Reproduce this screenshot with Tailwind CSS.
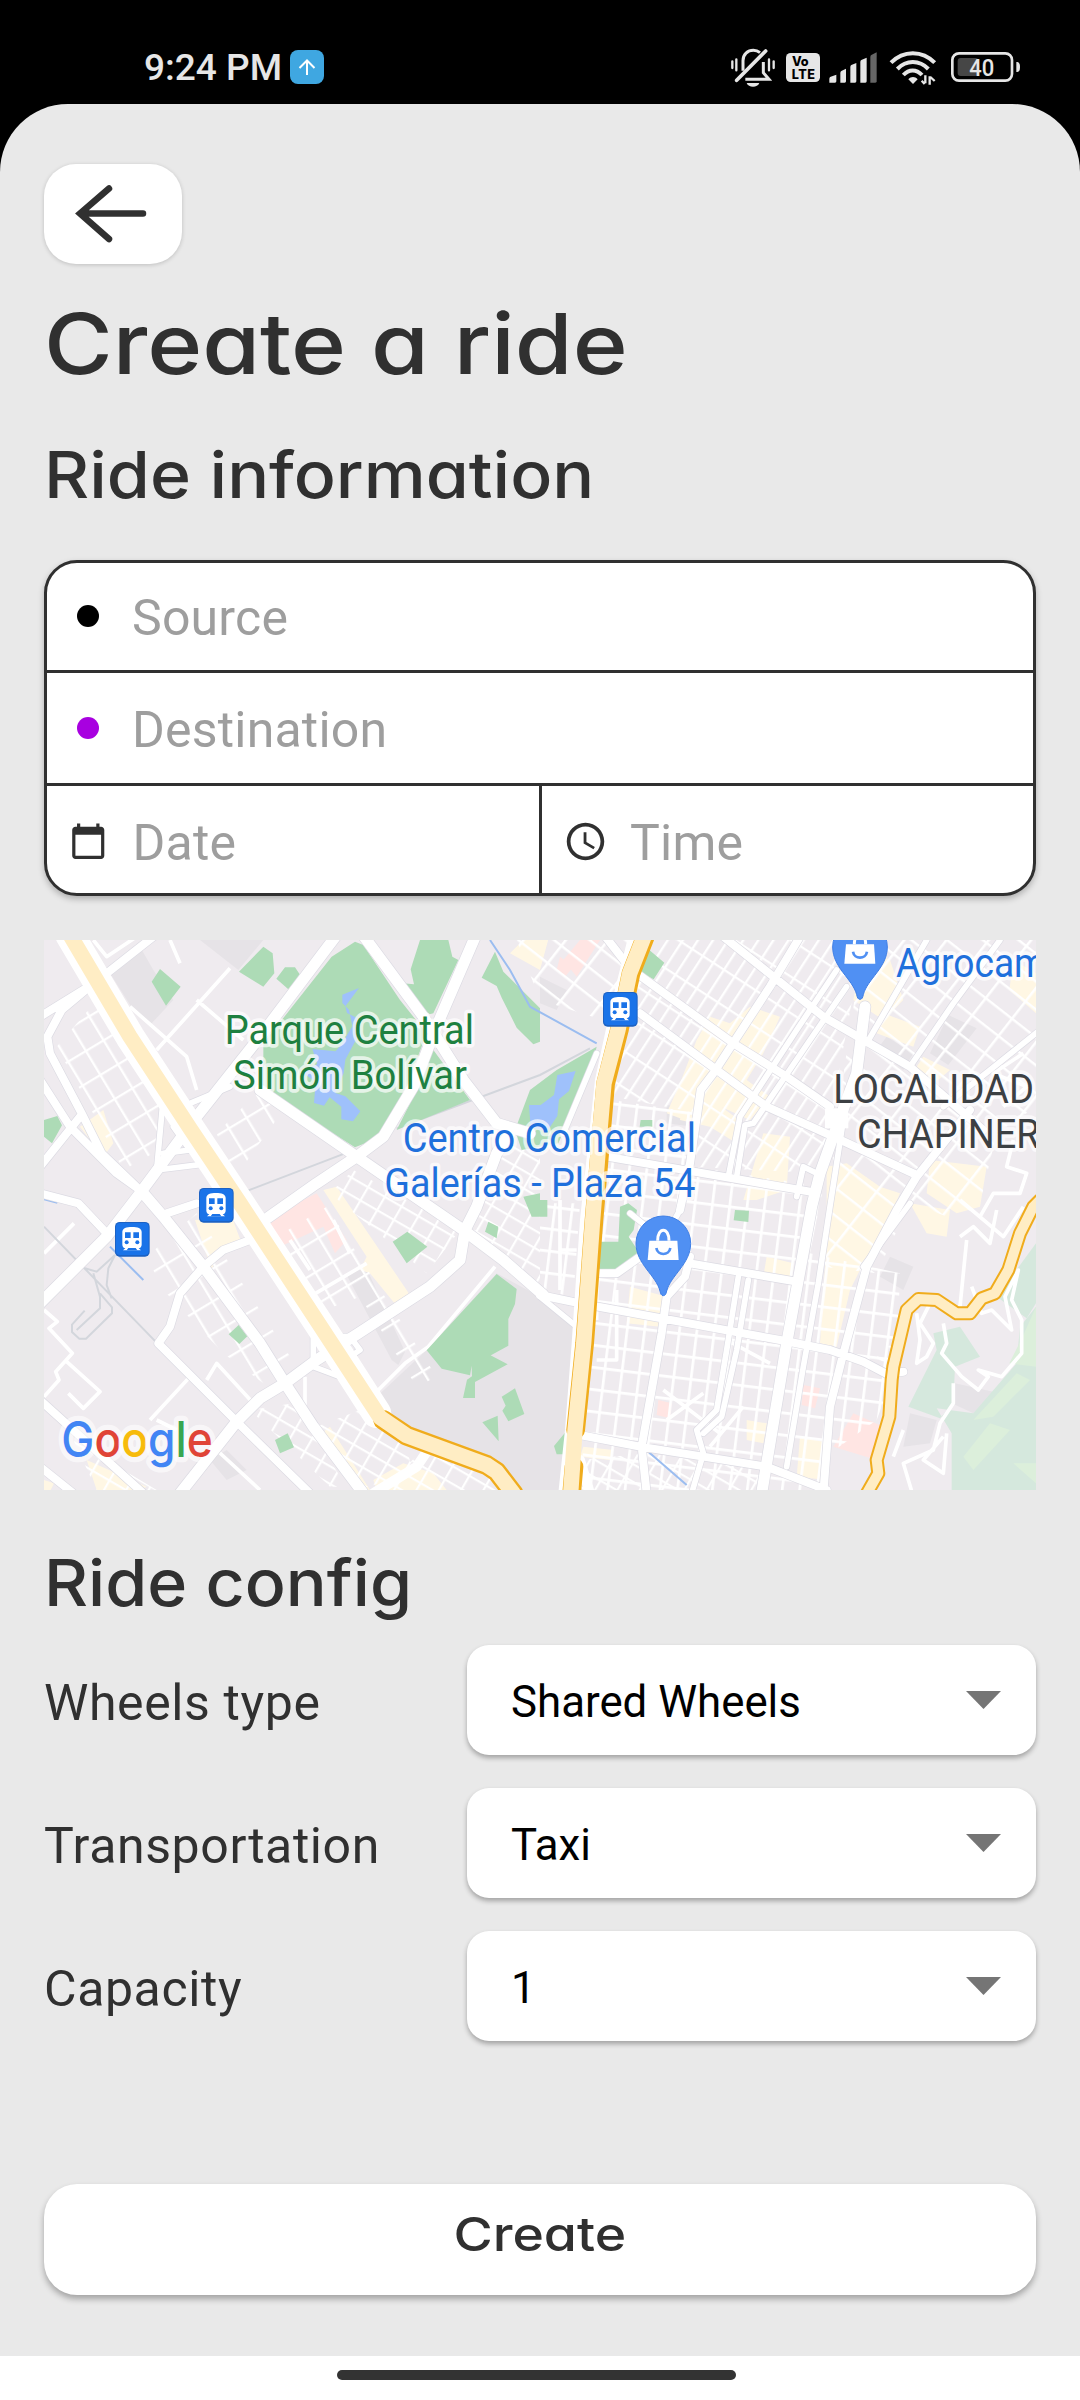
<!DOCTYPE html>
<html lang="en">
<head>
<meta charset="utf-8">
<title>Create a ride</title>
<script src="https://cdn.jsdelivr.net/npm/@tailwindcss/browser@4"></script>
</head>
<body class="bg-black">
<div class="w-[1080px] h-[2400px] overflow-hidden flex flex-col font-['Roboto',sans-serif] text-[#303030]">
  <header class="h-[104px] shrink-0 flex items-start justify-between pl-[144px] pr-[57px]">
    <div class="flex items-start gap-[8px] pt-[47px]">
      <span class="text-[37px] leading-[42px] font-medium text-[#e6e6e6]">9:24 PM</span>
      <svg class="w-[34px] h-[34px] mt-[3px]" viewBox="0 0 34 34"><rect width="34" height="34" rx="8" fill="#3fa7e1"/><path d="M17 25V11M9.500 18l7.500-7.500L24.500 18" fill="none" stroke="#fff" stroke-width="2"/></svg>
    </div>
    <svg class="w-[293px] h-[43px] mt-[47px]" viewBox="90 51 879 129" fill="#e6e6e6">
      <g fill="none" stroke="#e6e6e6">
        <path d="M129 122V92C129 73 143 61 160 61c8 0 15 3 20 7M190 96v32l17 20H136" stroke-width="9"/>
        <path d="M197 63L110 151" stroke-width="11" stroke-linecap="round"/>
        <path d="M97 94v20M109 88v33M207 88v33M221 94v20" stroke-width="7" stroke-linecap="round"/>
      </g>
      <path d="M140 159h38c-5 15-33 15-38 0z"/>
      <rect x="258" y="69" width="102" height="87" rx="14"/>
      <g fill="#000" font-family="Inter, sans-serif" font-weight="800" font-size="38"><text x="276" y="109" textLength="50">Vo</text><text x="275" y="146" textLength="70">LTE</text></g>
      <path d="M388 158v-12q0-4 4-6l17-6v20q0 4-4 4zM421 158v-29q0-4 3-6l14-7v38q0 4-4 4zM451 158v-47q0-4 3-6l15-6v55q0 4-4 4zM481 158V96q0-4 3-6l16-7v71q0 4-4 4z"/>
      <path fill="#666" d="M511 158V81q0-4 3-6l16-8v87q0 4-4 4z"/>
      <g fill="none" stroke="#e6e6e6" stroke-width="12"><path d="M573 98c37-38 94-38 131 0M592 117c27-28 66-28 93 0M610 135c17-18 39-18 56 0"/></g>
      <path d="M639 162l-14-14c8-9 20-9 28 0z"/>
      <path d="M676 136v24M689 164v-25M665 152l9 10M691 141l13 12" stroke="#e6e6e6" stroke-width="7"/>
      <rect x="757" y="70" width="179" height="82" rx="20" fill="none" stroke="#e6e6e6" stroke-width="8"/>
      <rect x="773" y="84" width="62" height="54" rx="9" fill="#464646"/>
      <path d="M949 96c9 0 11 6 11 15s-2 15-11 15z"/>
      <text x="808" y="137" font-size="69" font-weight="500" font-family="Roboto, sans-serif" textLength="75" lengthAdjust="spacingAndGlyphs">40</text>
    </svg>
  </header>

  <main class="h-[2252px] shrink-0 bg-[#e9e9e9] rounded-t-[68px] px-[44px] pt-[60px] flex flex-col">
    <button class="w-[138px] h-[100px] shrink-0 rounded-[32px] bg-white shadow-[0_1px_4px_rgba(0,0,0,0.18)] flex items-center justify-center">
      <svg class="w-[78px] h-[66px]" viewBox="0 0 78 66" fill="none" stroke="#303030" stroke-width="6.500" stroke-linecap="round"><path d="M35 7.500L6 32.500l29 25.500M7 32.500h62"/></svg>
    </button>
    <h1 class="mt-[30px] text-[84px] leading-[100px] font-medium font-['Inter',sans-serif] [font-feature-settings:'cv11'] origin-left scale-x-[1.115] whitespace-nowrap">Create a ride</h1>
    <h2 class="mt-[41px] text-[64.5px] leading-[80px] font-medium font-['Inter',sans-serif] [font-feature-settings:'cv11'] origin-left scale-x-[1.082] whitespace-nowrap">Ride information</h2>

    <section class="mt-[45px] w-[992px] h-[336px] shrink-0 rounded-[33px] border-[3px] border-[#303030] bg-white shadow-[0_3px_6px_rgba(0,0,0,0.25)] flex flex-col text-[50px] leading-[60px] text-[#9e9e9e] tracking-[0.2px]">
      <div class="h-[110px] border-b-[3px] border-[#303030] flex items-center pl-[30px] gap-[33px]">
        <span class="size-[22px] rounded-full bg-black -mt-[2px]"></span><span class="pt-[2px]">Source</span>
      </div>
      <div class="h-[113px] border-b-[3px] border-[#303030] flex items-center pl-[30px] gap-[33px]">
        <span class="size-[22px] rounded-full bg-[#a800e0]"></span><span class="pt-[4px]">Destination</span>
      </div>
      <div class="h-[107px] flex">
        <div class="w-[495px] border-r-[3px] border-[#303030] flex items-center pl-[22px] gap-[25px]">
          <svg class="size-[38.5px] mt-[3px]" viewBox="0 0 24 24" fill="#303030"><path d="M20 3h-1V1h-2v2H7V1H5v2H4c-1.100 0-2 .9-2 2v16c0 1.100.9 2 2 2h16c1.100 0 2-.9 2-2V5c0-1.100-.9-2-2-2zm0 18H4V8h16z"/></svg>
          <span class="pt-[6px]">Date</span>
        </div>
        <div class="flex items-center pl-[21px] gap-[22px]">
          <svg class="size-[45px] mt-[3px]" viewBox="0 0 24 24" fill="#303030"><path d="M11.990 2C6.470 2 2 6.480 2 12s4.470 10 9.990 10C17.520 22 22 17.520 22 12S17.520 2 11.990 2zM12 20c-4.420 0-8-3.580-8-8s3.580-8 8-8 8 3.580 8 8-3.580 8-8 8zm.5-13H11v6l5.250 3.150.75-1.230-4.500-2.670z"/></svg>
          <span class="pt-[6px]">Time</span>
        </div>
      </div>
    </section>

    <svg class="mt-[44px] w-[992px] h-[550px] shrink-0 block" viewBox="42 60 2976 1650">
      <defs>
        <pattern id="g1" width="52" height="66" patternUnits="userSpaceOnUse" patternTransform="rotate(7)"><path d="M0 0H52M0 0V66" stroke="#fff" stroke-width="16" fill="none"/></pattern>
        <pattern id="g2" width="38" height="92" patternUnits="userSpaceOnUse" patternTransform="rotate(33)"><path d="M0 0H38M0 0V92" stroke="#fff" stroke-width="14" fill="none"/></pattern>
        <pattern id="g3" width="100" height="66" patternUnits="userSpaceOnUse" patternTransform="rotate(38)"><path d="M0 0H100M0 0V66" stroke="#fff" stroke-width="15" fill="none"/></pattern>
        <pattern id="g4" width="62" height="84" patternUnits="userSpaceOnUse" patternTransform="rotate(-31)"><path d="M0 0H62M0 0V84" stroke="#fff" stroke-width="14" fill="none"/></pattern>
        <pattern id="g5" width="58" height="46" patternUnits="userSpaceOnUse" patternTransform="rotate(30)"><path d="M0 0H58M0 0V46" stroke="#fff" stroke-width="13" fill="none"/></pattern>
        <g id="train"><rect width="104" height="104" rx="14" fill="#1c62c4"/><rect x="3" y="3" width="98" height="96" rx="12" fill="#1a73e8"/><path fill="#fff" d="M22 30c0-11 12-15 29-15s29 4 29 15v38c0 6-4 10-9 11l7 6H24l7-6c-5-1-9-5-9-11z"/><path fill="#1a73e8" d="M30 31h17v17H30zM55 31h17v17H55zM40 78h22l5 7H35z"/><circle cx="35" cy="61" r="6" fill="#1a73e8"/><circle cx="67" cy="61" r="6" fill="#1a73e8"/></g>
        <g id="pin"><path d="M0 157c-6 0-8-5-10-14C-22 96-82 62-82 0a82 82 0 0 1 164 0C82 62 22 96 10 143c-2 9-4 14-10 14z" fill="#5090f3" stroke="#3f7fe6" stroke-width="3"/><path d="M-42-8h84l4 58h-93z" fill="#fff"/><path d="M-17-8c0-42 34-42 34 0" fill="none" stroke="#fff" stroke-width="9"/><path d="M-21 14c4 24 38 24 42 0" fill="none" stroke="#5090f3" stroke-width="8"/></g>
        <path id="avenues" d="M920 45L690 350 500 590 330 820 230 950 30 1150M995 40L1180 290 1300 480 1400 610 1500 640M1340 40L1215 330 1150 500 1060 650 980 710 860 790 690 910M690 510L980 710 1300 930 1420 1020 1540 1125M1440 640L1400 700 1340 860 1305 930 1290 1020 1200 1100 985 1240 860 1320 765 1390 690 1435 620 1505 450 1720M340 820L400 890 520 1040 690 1270 765 1390 850 1520 1000 1720M2505 260L2480 460 2420 620 2370 760 2345 860 2270 1270 2195 1720"/>
        <path id="roads" d="M370 50L230 160 160 210 30 290M190 190L95 270 52 350 60 400 155 580 215 700 340 820M30 480L120 620 260 760 330 810M30 740L150 590M30 820L145 850 230 940M660 960L580 990 520 1040 450 1120 420 1220 385 1270 620 1505 840 1720M30 1440L340 1720M30 1640L130 1720M410 880L500 850M1530 1125L1650 1150 2250 1260 2400 1290 2500 1325 2570 1362 2620 1355M1730 710L2340 815M1690 1060L1760 1060 1830 1010M1980 1030L2300 1085M1650 1545L1830 1580 2210 1640 2390 1710M2820 570L2660 770 2600 870 2510 1040 2435 1320 2400 1460 2380 1720M2310 50L2220 200 2050 460 2012 510 1980 730 1950 870M1980 1010L1965 1070 1910 1130 1895 1240 1835 1580 1850 1720M1820 160L2110 370 2270 470 2400 560M1830 280L2060 450 2210 560 2410 650 2660 765M2080 50L2230 170 2380 290 2640 440 2860 630M1730 55L1820 170"/>
        <path id="streets" d="M2420 150L2300 330 2130 590 2095 770M2450 200L2340 360 2170 610 2145 615 2120 770M2125 1070L2090 1290 2060 1470 2000 1530 2020 1600 1985 1720M2155 1080L2120 1290 2075 1490 2020 1540M2440 600L2400 860 2365 1090 2320 1340 2270 1640M2910 60L2770 250 2640 440M2690 60L2510 370M3030 330L2880 450 2740 560M1700 400L1600 640M2300 830L2320 740 2360 760M430 620L480 690 400 700M400 530L380 750 540 730M480 550L600 500M850 1250L850 1340 930 1370M900 1250l60 0 30 40-60 40M1800 880L1900 960 1950 870M1530 1130L1640 1220M2500 1040L2640 850"/>
        <path id="highway" d="M3030 840L3010 860 2970 940 2935 1050 2895 1120 2855 1135 2820 1180 2780 1180 2720 1140 2665 1137 2630 1170 2590 1340 2585 1380 2578 1490 2540 1620 2545 1660 2505 1730"/>
      </defs>
      <rect x="42" y="60" width="2976" height="1650" fill="#efebef"/>
      <!-- darker blocks -->
      <g fill="#e6e3e7">
        <path d="M330 80L240 160 310 270 365 310 430 240 370 150zM510 60H700L625 150z"/>
        <path d="M1190 1290L1400 1060 1530 1130 1640 1210 1620 1500 1600 1710H1450L1380 1630 1130 1530 1040 1430zM950 1065l55-30 120 260-20 40-20-15z"/>
        <path d="M1910 555l85 10-5 55-80-10zM2755 285l85 40-85 110-55-35zM2570 350l80 50-30 50-80-60zM2580 1010l70 30-30 70-70-40zM2640 1480l80 20-20 70-80 10zM2775 1390l135 30-80 60-65-30zM1530 170l80 40-30 60-50-20zM540 1620l50-30 60 60-60 30z"/>
      </g>
      <!-- commercial blocks -->
      <g fill="#fff7e4">
        <path d="M2000 360l40-70 60 20 60-50 90 30-50 110-50 80 70 50-60 70-110-50-60 60-80-30 40-90zM1960 520l100 30 80 60-20 60-80-50-90-20zM2560 280l110 40-20 60-110-40zM2680 410l80 40-60 50-60-30zM2950 120l68 40v120l-80-70zM2500 80l80 40 40 120-60 60-90-60z"/>
        <path d="M2200 640l80 10-10 160-90 30-40 0zM2390 740l60-10 100 70 60 20-40 90-60 100-50 100-40 170-50-10 20-300zM2700 720l170 20-20 120-70 20-90-60zM1800 1100l110 30-20 90-100-10zM2210 1010l80 20-10 60-80-20zM2640 850l120 20-10 80-60-10z"/>
        <path d="M150 620l70-50 30 100-30 40zM495 900l110-10 30 80-70 20-20 60zM880 810l40-10 230 340-40 30-90-110-30-10 20-40zM860 1550l40-30 120 190h-50zM1030 1680l90-50 90 30 40 50H1040zM170 1620l180 80-20 10H200zM42 1680l30 10-10 20H42zM2150 1500l60 10-10 60-50-10zM2310 1550l90 20-10 110-90-10zM1660 1580l90 10-10 30-90-10zM1440 100l60-60h60l-30 110z"/>
      </g>
      <g fill="#ffe5e3"><path d="M700 900L860 820 950 960 915 1000 880 920 750 980zM1600 120l50-60h60l-70 110zM1885 1440l40 10-5 45-40-10zM2320 1395l50 10-15 60-40-10zM2410 1580l60-100 90 40-20 100zM1590 110l40 30-25 30-25-20z"/></g>
      <!-- eastern hills -->
      <path fill="#d5e8dd" d="M3018 970L2900 1130 2990 1195 3018 1150zM3018 1160L2970 1220 2960 1330 2830 1480 2720 1465 2765 1540V1710H3018zM2710 1240L2790 1220 2850 1310 2775 1340 2770 1450 2730 1495 2635 1460 2720 1290z"/>
      <path fill="#dcefdb" d="M3018 1160l-40 90-40 80 80 10zM2830 1500l130-140 40 20-110 110zM2800 1610l80-100 60 20-110 120zM2950 1630l68 0v60z"/>

      <!-- street grids -->
      <path fill="url(#g1)" d="M1745 540L2010 580 1990 740 2380 800 2340 1000 2610 1060 2600 1340 2540 1500 2400 1600 2390 1710H1650L1690 1180zM1530 850h120l-20 280-100-20z"/>
      <path fill="url(#g2)" d="M1850 60H2500L2370 760 1990 740 2010 580 1750 530 1790 250z"/>
      <path fill="url(#g3)" d="M2500 60H3018V560L2900 640 2850 850 2780 900 2640 850 2540 1060 2380 1040 2420 600zM1460 60h350l-60 250-220-70z"/>
      <path fill="url(#g4)" d="M80 380L210 230 400 530 370 700 280 750 200 600zM560 640L690 510 760 570 610 780zM740 950l150-90 330 510-60 30L990 1130 830 1190z"/>
      <path fill="url(#g4)" d="M350 1010l150-130 300 460-100 50-120-90-180-190z"/>
      <path fill="url(#g5)" d="M900 820l70-70 320 180-100 130zM1420 680l110-40v480l-200-180zM860 1520l130-50 130 80 30 110-170 50zM1180 1590l210 50 60 70H1050zM660 1470l130-20 160 250H900zM130 1560l250 150H200zM2530 1320l100-90-30 100zM1650 1620l200-20 350 50v60H1650z"/>
      <g fill="none" stroke="#fff" stroke-width="11" stroke-linejoin="round">
        <path d="M380 390L600 145M300 260l170 150 30 100M500 240l140 120M190 60l40 50 90-60M42 1170l40 35-25 20 70 75-50 55 10 25-45 50M110 1325l100 90-50 50-45-45M42 1000l90-90M360 1500l120-130M380 1500l60 30M530 1380l30-50 110 120M780 960l60 90M910 900l50 100M840 1130l170-100M720 920l30 50M1030 1425l95-95 70-50 200-240M825 1370v90M560 1590l130 120M420 60l30 70"/>
        <path d="M2790 840l130 110 60-90M2790 950l40-30 50 50 20-100M2810 960l-20 200M2660 1180l10 80-10 70 30-20 20-40-40-60 30-60M2740 1210l10 60-15 30 60 70 50 40 30-40-30-20 70 20 60-70 0-100-30-60 20-90-40 80 20 100-60-60-30 10-30-80M2770 1390l0 60-40 60-20 80-90 40 30 100M2590 1610l30-80M2750 1540l-10 120-60-40 60-70M2950 660l-20 80 60 20-20 60-80 0-40 70M2980 400l-90 60 100 40-70 60"/>
        <path d="M1700 1040v160M1760 1110v210h-60M1590 840v270M1640 990h-50M2090 1260l130 70M1900 1410l170 130M1910 1500l110-80M2040 1580l100-120"/>
      </g>
      <path fill="none" stroke="#d3d6dc" stroke-width="6" d="M42 920l340 350M165 1045l35 10 55-50-20 40-5 50 15 40M190 1060l20 70v35l-70 65M210 1120l36 42v18l-78 76h-20l-22-20v-22l38-42M645 815l300-115M1100 625l430-160 150-80"/>

      <!-- parks and water -->
      <g fill="#addbb6">
        <path d="M975 65L1000 75 1060 165 1110 240 1190 340 1130 500 1060 630 1030 660 975 682 700 510 700 370 905 110zM1170 60h85l12 50 18 10-75 160-20 5-72-95 34 3-10-45zM1395 95l25 60 110 110v100l-20 8-50-50-45-90-15-35-45-25zM700 80l28 20 5 60-33 40-73-45zM765 142h30l16 24-36 42-36-32zM390 147l62 53-44 57-43-72zM42 600l40-12 14 28-30 54-24-20zM1210 390l110 150-220 90 50-100zM1500 510l80-60 120-70-15 60-100 230-110 20-20-60z"/>
        <path d="M1400 1062l60 45-5 45-20 45v80l-110 60-5 29-85-20-45-55zM1325 1337l55-32 53 28-98 53v48h-36l12-55 15-10zM1415 1430l40-25 28 77-48 22-18-32 10-15zM1357 1507l46-20 3 77zM1132 935l60 45-62 50-42-65zM596 1243l30-28 26 34-24 23zM735 1560l38-20 19 42-42 18zM1375 905l30 15-5 35-35-20zM1830 100l28-10 45 38-32 50-50-25zM1832 600h35v20h-38zM1770 860l25-10 26 20-10 60-15 20 30 45-20 30-35 35h-66l5-95h55zM2115 870l42 2-2 34-44-5zM1605 1538v65h-25l-8-25zM1480 830l50-10v70h-25zM1530 840h22v50h-22z"/>
      </g>
      <g fill="#9fc1fb"><path d="M987 204l-50 20v25l20 20 10 50-30 50-20 25-70-7 15 45-45 25 40 30-5 62 30 8 17-25 35 28v38l35 6 22-30-45-45-30-10 25-60 5-40 40-75-5-50-30-15-5-20z"/><path d="M1497 555h35l40-30 10-60 55-12-20 60-30 25-5 50-30 45-50-10z"/></g>
      <path fill="none" stroke="#9bbdf0" stroke-width="6" d="M1380 60l60 90 60 110 200 110M240 980l100 100M42 838l40 10M1855 1595l115 100"/>

      <!-- avenues: grey casing under white -->
      <g fill="none" stroke-linejoin="round" stroke-linecap="round">
        <g stroke="#dcdbe3"><use href="#avenues" stroke-width="37"/><use href="#roads" stroke-width="28"/><use href="#streets" stroke-width="21"/></g>
        <g stroke="#fff">
          <use href="#avenues" stroke-width="33"/><use href="#roads" stroke-width="24"/><use href="#streets" stroke-width="17"/>
          <path stroke-width="30" d="M1810 50L1760 250 1710 480 1665 900 1640 1270 1620 1530 1600 1720M1200 1580L1160 1640 1030 1720M1650 1620l30 100"/>
          <path stroke-width="70" stroke-linecap="butt" d="M2420 565v60"/>
        </g>
        <!-- highways -->
        <path stroke="#fff" stroke-width="88" d="M120 45L300 350 480 625 630 850 905 1270 1040 1480"/>
        <path stroke="#f0ac1c" stroke-width="56" d="M1850 40L1803 160 1768 330 1727 490 1709 700 1692 900 1664 1270 1637 1530M1632 1640L1625 1720"/>
        <path stroke="#f0ac1c" stroke-width="60" d="M1060 1500L1130 1547 1370 1635 1400 1655 1450 1720"/>
        <path stroke="#ffedc4" stroke-width="46" d="M120 45L300 350 480 625 630 850 905 1270 1050 1492 1130 1547 1370 1635 1400 1655 1450 1720M1846 40L1799 160 1764 330 1722 490 1704 700 1688 900 1661 1270 1635 1530 1622 1720"/>
        <use href="#highway" stroke="#f0ac1c" stroke-width="42"/>
        <use href="#highway" stroke="#ffedc4" stroke-width="30"/>
      </g>

      <use href="#train" x="1719" y="216"/>
      <use href="#train" x="507" y="804"/>
      <use href="#train" x="255" y="906"/>
      <use href="#pin" x="2490" y="81"/>
      <use href="#pin" x="1900" y="970"/>

      <g font-family="Roboto, sans-serif" font-size="121" stroke="#fff" stroke-opacity=".7" stroke-width="22" stroke-linejoin="round" paint-order="stroke">
        <g fill="#1e8040"><text x="584" y="371" textLength="748" lengthAdjust="spacingAndGlyphs">Parque Central</text><text x="609" y="506" textLength="702" lengthAdjust="spacingAndGlyphs">Simón Bolívar</text></g>
        <g fill="#1f70dc"><text x="1118" y="697" textLength="880" lengthAdjust="spacingAndGlyphs">Centro Comercial</text><text x="1063" y="831" textLength="933" lengthAdjust="spacingAndGlyphs">Galerías - Plaza 54</text><text x="2598" y="170" textLength="452" lengthAdjust="spacingAndGlyphs">Agrocam</text></g>
        <g fill="#3c4043"><text x="2410" y="548" textLength="602" lengthAdjust="spacingAndGlyphs">LOCALIDAD</text><text x="2481" y="684" textLength="548" lengthAdjust="spacingAndGlyphs">CHAPINER</text></g>
      </g>
      <text x="94" y="1612" font-family="Inter, sans-serif" font-size="146" font-weight="500" textLength="454" lengthAdjust="spacingAndGlyphs" stroke="#fff" stroke-opacity=".6" stroke-width="32" stroke-linejoin="round" paint-order="stroke"><tspan fill="#4285f4">G</tspan><tspan fill="#e04437">o</tspan><tspan fill="#f7bb0c">o</tspan><tspan fill="#4285f4">g</tspan><tspan fill="#38a651">l</tspan><tspan fill="#e04437">e</tspan></text>
    </svg>

    <h2 class="mt-[53px] text-[64.5px] leading-[80px] font-medium font-['Inter',sans-serif] [font-feature-settings:'cv11'] origin-left scale-x-[1.055] whitespace-nowrap">Ride config</h2>
    <div class="mt-[22px] flex flex-col gap-[33px] text-[50px] leading-[60px]">
      <div class="h-[110px] flex items-center justify-between">
        <span class="pt-[6px] tracking-[0.6px]">Wheels type</span>
        <div class="w-[569px] h-[110px] rounded-[22px] bg-white shadow-[0_3px_5px_rgba(0,0,0,0.3)] flex items-center justify-between pl-[44px] pr-[35px] text-[43.8px] text-black"><span class="pt-[4px]">Shared Wheels</span><svg class="w-[35px] h-[18px]" viewBox="0 0 35 18"><path d="M0 0h35L17.500 18z" fill="#757575"/></svg></div>
      </div>
      <div class="h-[110px] flex items-center justify-between">
        <span class="pt-[6px] tracking-[0.6px]">Transportation</span>
        <div class="w-[569px] h-[110px] rounded-[22px] bg-white shadow-[0_3px_5px_rgba(0,0,0,0.3)] flex items-center justify-between pl-[44px] pr-[35px] text-[43.8px] text-black"><span class="pt-[4px]">Taxi</span><svg class="w-[35px] h-[18px]" viewBox="0 0 35 18"><path d="M0 0h35L17.500 18z" fill="#757575"/></svg></div>
      </div>
      <div class="h-[110px] flex items-center justify-between">
        <span class="pt-[6px] tracking-[0.6px]">Capacity</span>
        <div class="w-[569px] h-[110px] rounded-[22px] bg-white shadow-[0_3px_5px_rgba(0,0,0,0.3)] flex items-center justify-between pl-[44px] pr-[35px] text-[43.8px] text-black"><span class="pt-[4px]">1</span><svg class="w-[35px] h-[18px]" viewBox="0 0 35 18"><path d="M0 0h35L17.500 18z" fill="#757575"/></svg></div>
      </div>
    </div>
    <button class="mt-[143px] h-[111px] shrink-0 pb-[11px] rounded-[33px] bg-white shadow-[0_4px_6px_rgba(0,0,0,0.3)] text-[47px] font-medium font-['Inter',sans-serif] [font-feature-settings:'cv11']"><span class="inline-block scale-x-[1.14]">Create</span></button>
  </main>
  <footer class="h-[44px] shrink-0 bg-white flex justify-center pt-[14px] pr-[7px]"><div class="w-[399px] h-[10px] rounded-full bg-[#333]"></div></footer>
</div>
</body>
</html>
